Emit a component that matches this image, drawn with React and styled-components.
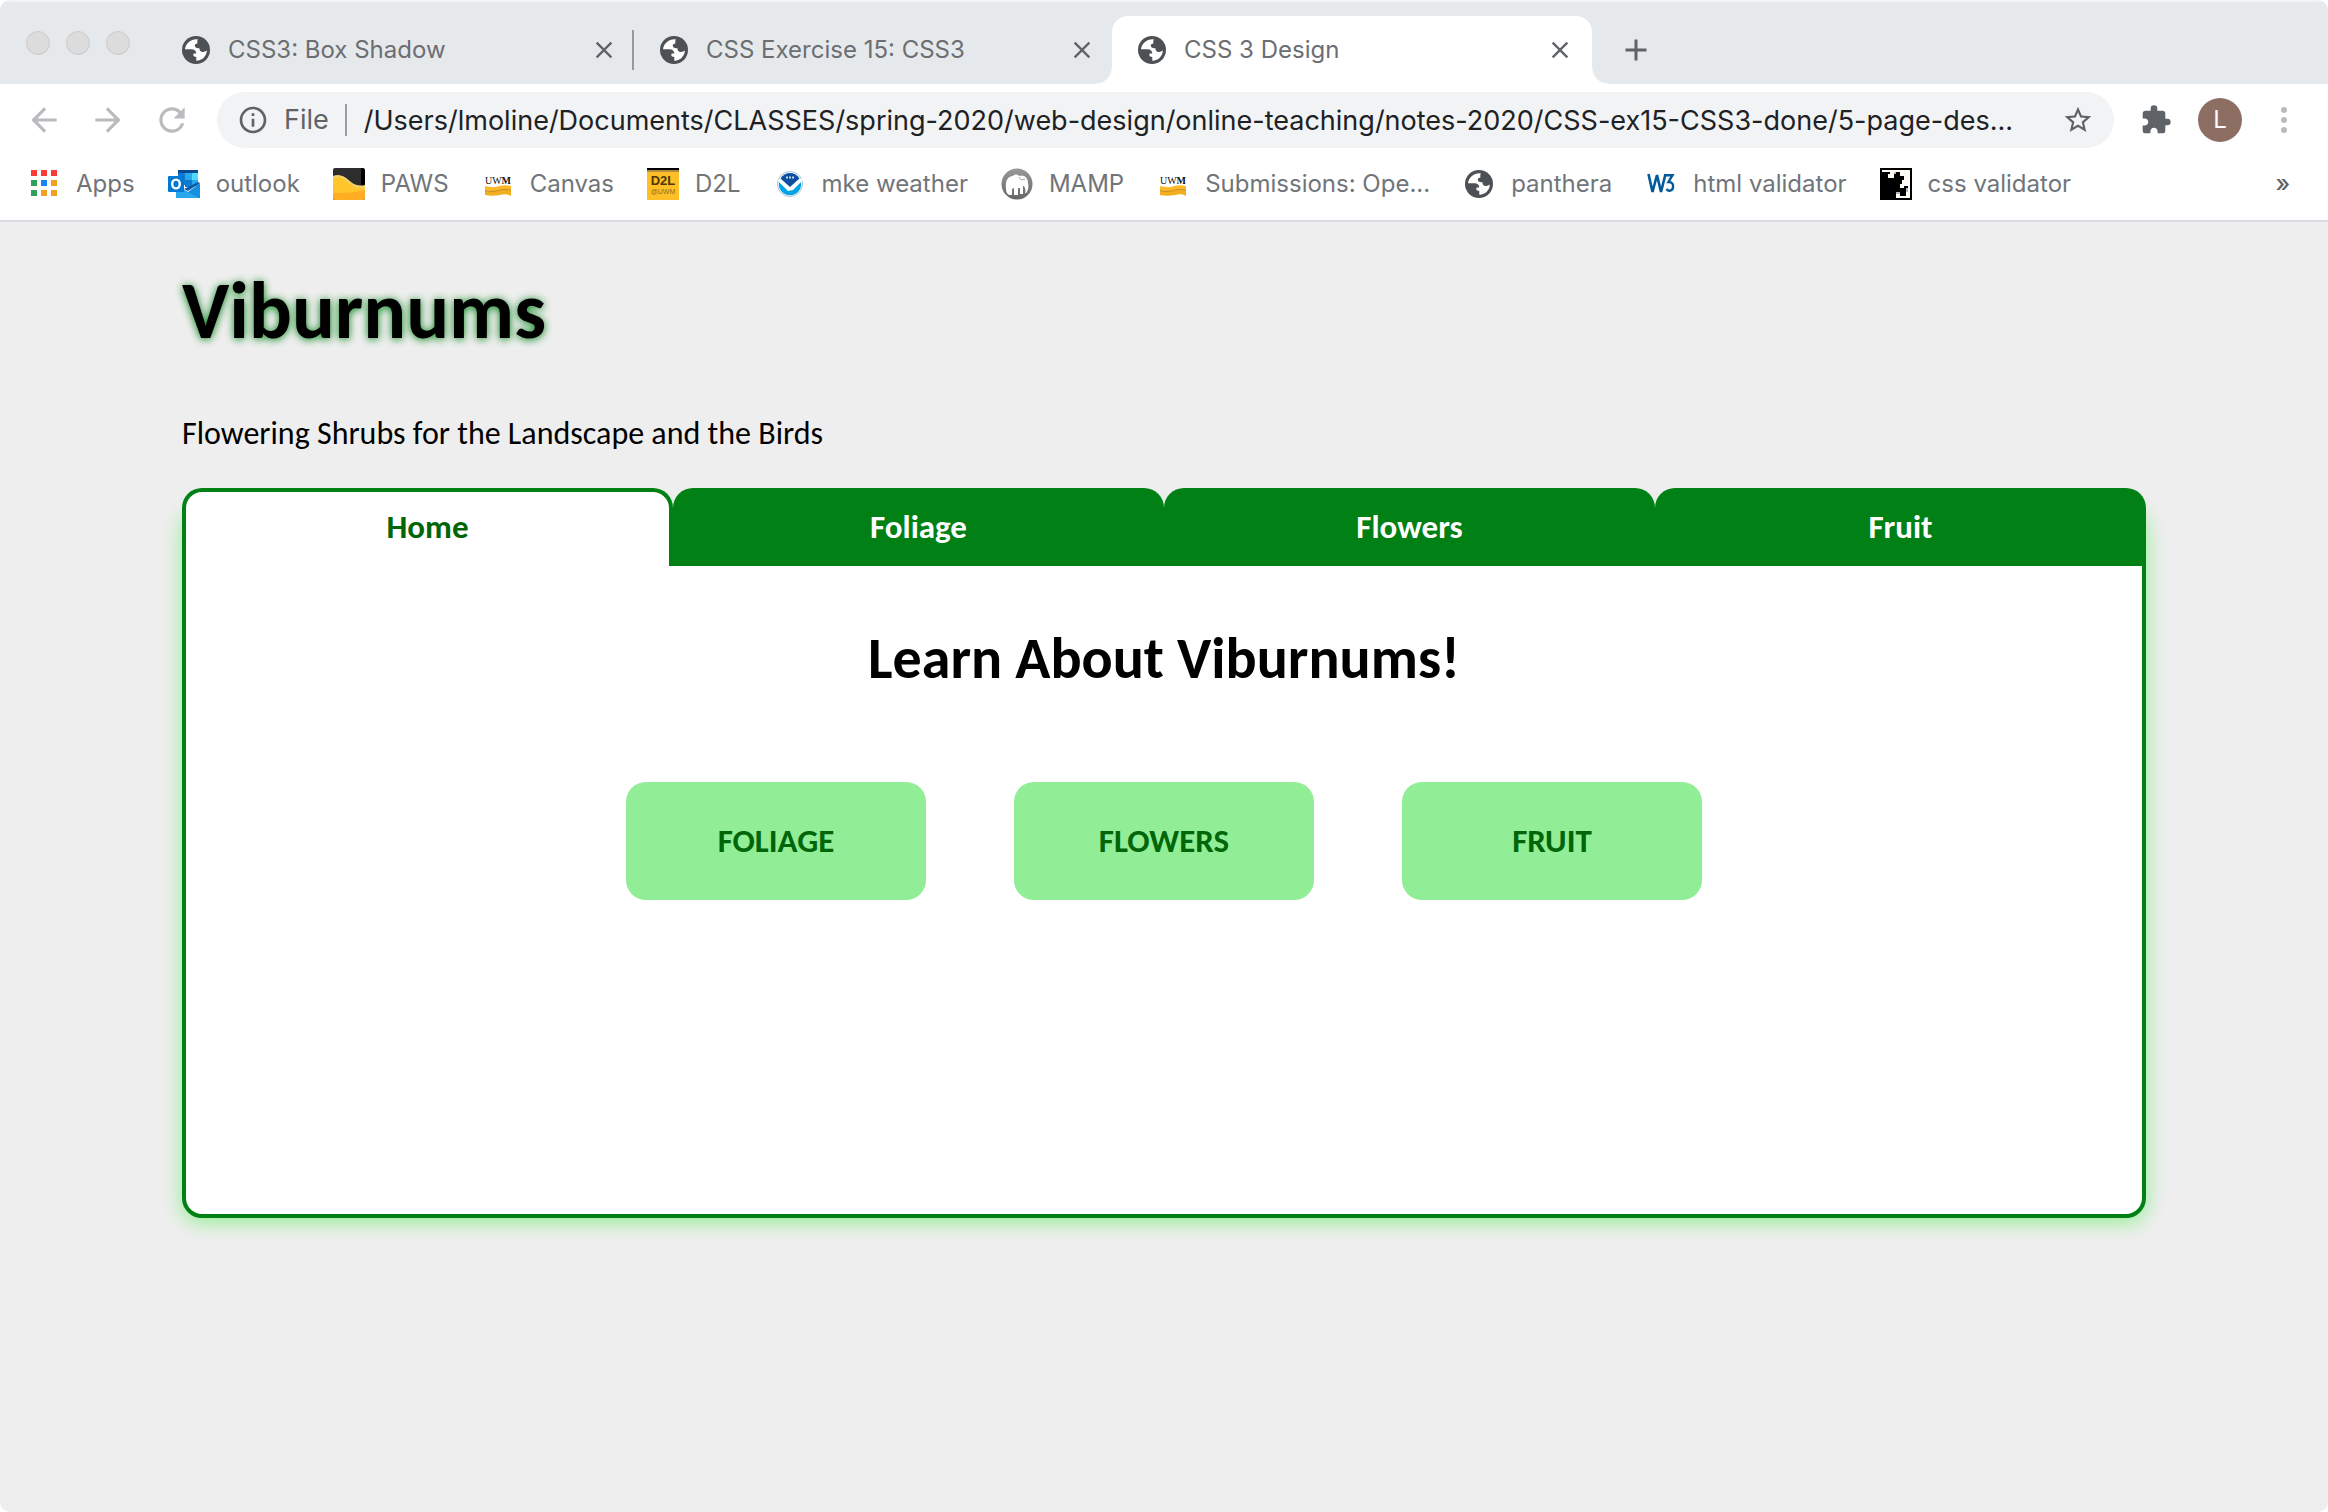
import React from 'react';
import styled, { createGlobalStyle } from 'styled-components';
import { MdArrowBack, MdArrowForward, MdRefresh, MdInfoOutline, MdStarBorder, MdExtension, MdClose, MdAdd } from 'react-icons/md';

const GlobalStyle = createGlobalStyle`
  *, *::before, *::after { box-sizing: border-box; }
  body { margin: 0; background: #fff; }
  button, input { font: inherit; color: inherit; }
  button { padding: 0; border: 0; background: none; cursor: pointer; }
  a { color: inherit; text-decoration: none; }
  svg { display: block; flex: none; }
`;

const Window = styled.div`
  display: flex;
  flex-direction: column;
  min-height: 100vh;
  overflow: hidden;
  border-radius: 10px;
  background: #eee;
  color: #000;
  font-family: Carlito, Calibri, Lato, sans-serif;
`;

const Chrome = styled.header`
  background: #fff;
  border-bottom: 2px solid #dadbe1;
  color: #5f6368;
  font-family: Inter, 'Liberation Sans', sans-serif;
  font-size: 24px;
  line-height: 32px;
`;

/* ---- tab strip ---- */
const TabStrip = styled.div`
  display: flex;
  align-items: flex-end;
  height: 84px;
  border-top: 2px solid #f1f3f4;
  background: #e6e9ec;
`;

const TrafficLights = styled.div`
  display: flex;
  align-self: flex-start;
  gap: 16px;
  width: 156px;
  padding: 29px 26px;
`;

const Light = styled.span`
  width: 24px;
  height: 24px;
  border: 1px solid #c9c9ca;
  border-radius: 50%;
  background: #dcdcdd;
`;

const BrowserTab = styled.div`
  position: relative;
  display: flex;
  align-items: center;
  gap: 16px;
  width: ${p => (p.$active ? 480 : 478)}px;
  height: 68px;
  padding: 0 ${p => (p.$active ? 18 : 16)}px 0 24px;
  color: #6b6e72;
  ${p => p.$divided && `
    background: linear-gradient(#96999c, #96999c) right center / 2px 40px no-repeat;
  `}
  ${p => p.$active && `
    border-radius: 16px 16px 0 0;
    background: #fff;
    &::before, &::after {
      content: '';
      position: absolute;
      bottom: 0;
      width: 16px;
      height: 16px;
    }
    &::before {
      right: 100%;
      background: radial-gradient(circle at 0 0, transparent 15px, #fff 16px);
    }
    &::after {
      left: 100%;
      background: radial-gradient(circle at 100% 0, transparent 15px, #fff 16px);
    }
  `}
`;

const TabTitle = styled.a`
  flex: 1;
  white-space: nowrap;
`;

const IconButton = styled.button`
  display: grid;
  place-items: center;
  flex: none;
  width: ${p => p.$size || 32}px;
  height: ${p => p.$size || 32}px;
  color: ${p => p.$color || '#5f6368'};
`;

const NewTab = styled.div`
  display: flex;
  align-items: center;
  height: 68px;
  padding-left: 26px;
`;

/* ---- toolbar ---- */
const Toolbar = styled.div`
  display: flex;
  align-items: center;
  gap: 26px;
  height: 72px;
  padding: 0 28px 0 25px;
`;

const Omnibox = styled.div`
  display: flex;
  align-items: center;
  flex: 1;
  min-width: 0;
  height: 56px;
  padding: 0 20px;
  border-radius: 28px;
  background: #f1f3f4;
  font-size: 27px;
`;

const Scheme = styled.span`
  padding: 0 16px 0 15px;
  border-right: 2px solid #9b9ea2;
`;

const Address = styled.input`
  flex: 1;
  min-width: 0;
  height: 40px;
  padding: 0 0 0 17px;
  border: 0;
  outline: 0;
  background: none;
  color: #202124;
`;

const Avatar = styled.button`
  flex: none;
  width: 44px;
  height: 44px;
  border-radius: 50%;
  background: #8d6e63;
  color: #fff;
`;

const Actions = styled.div`
  display: flex;
  align-items: center;
  gap: 26px;
`;

/* ---- bookmarks ---- */
const Bookmarks = styled.nav`
  display: flex;
  align-items: center;
  gap: 33px;
  height: 64px;
  padding: 0 38px 8px 28px;
  color: #70757a;
`;

const Bookmark = styled.a`
  display: flex;
  align-items: center;
  gap: 16px;
  white-space: nowrap;
`;

const More = styled.button`
  margin-left: auto;
  color: #5f6368;
  font-weight: 500;
`;

/* ---- page ---- */
const Page = styled.div`
  flex: 1;
  padding: 40px 182px 64px;
  font-size: 32px;
  line-height: 39px;
`;

const SiteTitle = styled.h1`
  margin: 0 0 54px;
  font-size: 80px;
  line-height: 98px;
  text-shadow: 0 1px 9px #008015;
`;

const Tagline = styled.p`
  margin: 0 0 35px;
`;

const SiteNav = styled.nav`
  position: relative;
  display: grid;
  grid-template-columns: repeat(4, 1fr);
  font-size: 33px;
  font-weight: 700;
  text-align: center;
`;

const NavTab = styled.a`
  padding: 16px 0 19px;
  border: 4px solid #008015;
  border-bottom: 0;
  border-radius: 20px 20px 0 0;
  background: ${p => (p.$current ? '#fff' : '#008015')};
  color: ${p => (p.$current ? '#006608' : '#fff')};
`;

const Panel = styled.main`
  min-height: 710px;
  margin-top: -58px;
  padding: 112px 0 64px;
  border: 4px solid #008015;
  border-radius: 20px;
  background: #fff;
  box-shadow: 0 4px 20px #90ee90;
  text-align: center;
`;

const Heading = styled.h2`
  margin: 0 0 88px;
  font-size: 58px;
  line-height: 70px;
`;

const ButtonRow = styled.div`
  display: flex;
  justify-content: center;
  gap: 88px;
`;

const BigLink = styled.a`
  width: 300px;
  padding: 40px 0 39px;
  border-radius: 20px;
  background: #91ee97;
  color: #006608;
  font-size: 33px;
  font-weight: 700;
`;

/* ---- drawings ---- */
const Globe = () => (
  <svg width="32" height="32" viewBox="0 0 32 32" aria-hidden="true">
    <circle cx="16" cy="16" r="14" fill="#4d5156" />
    <path fill="#fff" d="M17.8 5.2C11 4.6 5.6 9.200 5 15.200h6.500c3 0 4.800 1.800 4.800 4.300h-2.600c-.7 1.800-.6 3.300 2.600 3.500V26.800c5.900.1 10.300-4.700 10.600-10.200-1.500 1.200-3.400 1.700-5 1.300-2-.5-2.500-2.200-2.400-3.700-2.600.4-4.900-.6-4.700-2.900.1-1.300 1.300-1.700 2.600-1.800-.2-1.600-.2-3.200.4-4.300z" />
  </svg>
);

const AppsIcon = () => {
  const colors = ['#f93a37', '#f93a37', '#f93a37', '#2ea25a', '#1a82fb', '#f2a024', '#2ea25a', '#f2a024', '#f2a024'];
  return (
    <svg width="32" height="32" viewBox="0 0 32 32" aria-hidden="true">
      {colors.map((c, i) => (
        <rect key={i} x={3 + (i % 3) * 10} y={2 + Math.floor(i / 3) * 10} width="6" height="6" fill={c} />
      ))}
    </svg>
  );
};

const OutlookIcon = () => (
  <svg width="32" height="32" viewBox="0 0 32 32" aria-hidden="true">
    <path fill="#0a4a93" d="M10 2h20v4H10z" />
    <path fill="#0f7ad2" d="M10 5h7v12h-7z" />
    <path fill="#28a8ea" d="M17 5h7v7h-7z" />
    <path fill="#50d9ff" d="M24 5h6v7h-6z" />
    <path fill="#0f7ad2" d="M17 12h7v7h-7z" />
    <path fill="#28a8ea" d="M24 12h6v6h-6z" />
    <path fill="#1490df" d="M32 15v15H8V17l12 7z" />
    <path fill="#28a8ea" d="M8 30V18l23 12z" />
    <path fill="#0c5aa6" d="M30 14l2 1-12 8-4-2z" />
    <rect y="8" width="16" height="16" rx="1" fill="#0078d4" />
    <ellipse cx="8" cy="16" rx="3.800" ry="4.400" fill="none" stroke="#fff" strokeWidth="2.400" />
  </svg>
);

const PawsIcon = () => (
  <svg width="32" height="32" viewBox="0 0 32 32" aria-hidden="true">
    <rect width="32" height="32" rx="2" fill="#2d2d2d" />
    <path fill="#000" d="M28 0h2l2 2v18h-4z" />
    <path fill="#ffc52b" d="M0 9c8-3 13 2 18 6s10 4 14 3v12l-2 2H2l-2-2z" />
    <path fill="#f3d069" d="M0 8c8-3 13 2 18 6s10 4 14 3v3c-5 1-10 0-15-4S8 7 0 11z" />
    <path fill="#ffae23" d="M0 25c10 0 20 0 32-3v8l-2 2H2l-2-2z" />
  </svg>
);

const UwmIcon = () => (
  <svg width="32" height="32" viewBox="0 0 32 32" aria-hidden="true">
    <text x="16" y="16" textAnchor="middle" fontFamily="Liberation Serif, serif" fontSize="10" fill="#111">
      UW<tspan fontWeight="700">M</tspan>
    </text>
    <path fill="#fdb827" d="M3 18c5 1 9 2 14 0 4-1 8-1 12 0v4c-4-1-8-1-12 0-5 2-9 1-14 0z" />
    <path fill="#f3ae1e" d="M3 22.500c6 1 10 1 14-.3 4-1 8-1 12 0V28c-3-2-7-2-11-1-5 1-10 1-15 0z" />
    <path stroke="#b97f16" strokeWidth=".8" fill="none" d="M3 22.500c5 1 9 1.500 14-.3 4-1 8-1 12 0" />
  </svg>
);

const D2lIcon = () => (
  <svg width="32" height="32" viewBox="0 0 32 32" aria-hidden="true">
    <rect width="32" height="32" fill="#ffbf27" />
    <rect width="32" height="2" fill="#000" />
    <rect y="2" width="32" height="2" fill="#b38d42" />
    <text x="16" y="17" textAnchor="middle" fontFamily="Liberation Sans, sans-serif" fontWeight="700" fontSize="13" fill="#4a3805">D2L</text>
    <text x="16" y="26" textAnchor="middle" fontFamily="Liberation Sans, sans-serif" fontSize="7" fill="#94701a">@UWM</text>
  </svg>
);

const NoaaIcon = () => (
  <svg width="32" height="32" viewBox="0 0 32 32" aria-hidden="true">
    <circle cx="16" cy="16" r="12.500" fill="#fff" stroke="#a9bfdc" />
    <path fill="#0b4ea2" d="M6.500 10.500a11 11 0 0 1 19 0L16 19z" />
    <path fill="#00a3e6" d="M5 14l5 5 4 4 5-1 8-8a11.200 11.200 0 1 1-22 0z" />
    <path fill="none" stroke="#fff" strokeWidth="2" d="M4.500 11.500L15 21l3-1 10-8.500" />
    <path stroke="#c5d6ec" strokeWidth="2" strokeDasharray="2 1" d="M12 9.500h9" />
  </svg>
);

const MampIcon = () => (
  <svg width="32" height="32" viewBox="0 0 32 32" aria-hidden="true">
    <defs>
      <linearGradient id="mamp" x1="0" y1="0" x2="0" y2="1">
        <stop offset="0" stopColor="#999" />
        <stop offset="1" stopColor="#666" />
      </linearGradient>
    </defs>
    <circle cx="16" cy="16" r="15.500" fill="url(#mamp)" />
    <path fill="#fff" d="M5 21c-1-8 2-13 7-13 1-2 5-2 6 0 5-2 9 2 9 7 1 4 0 8-2 10l-1 0c1-3 0-5-1-7h-1v8h-3v-6h-2v7h-4v-7l-2 1v6H8c-2-1-3-3-3-6z" />
    <path stroke="#aaa" fill="none" d="M18 9l2 3 4-1" />
  </svg>
);

const W3Icon = () => (
  <svg width="32" height="32" viewBox="0 0 32 32" aria-hidden="true">
    <path fill="none" stroke="#005a9c" strokeWidth="2.600" d="M3.500 6l4 18L12 7l4 17 4.500-18" />
    <path fill="none" stroke="#005a9c" strokeWidth="2.400" d="M19 7.200h8.500L23.500 14c4 0 5 2.500 4.500 5.500-.6 3.500-4.500 4.500-6.500 1.500" />
  </svg>
);

const CssIcon = () => (
  <svg width="32" height="32" viewBox="0 0 32 32" aria-hidden="true">
    <rect width="32" height="32" fill="#000" />
    <path fill="#fffdf3" d="M2 2h28v28H16v-4h4v2h6v-8h2v-2h-4v2h-4v-4h2v-4h2v-4h-2V8h-2V4h-4v2h-2v4H8V6h2V4H2z" />
    <path fill="#b5b5c0" d="M16 24h4v2h-4zM14 4h2v2h-2zM26 20h2v4h-2z" />
  </svg>
);

const MenuDots = () => (
  <svg width="32" height="32" viewBox="0 0 32 32" fill="#b9bbbe" aria-hidden="true">
    {[6, 16, 26].map(y => <circle key={y} cx="16" cy={y} r="3" />)}
  </svg>
);

const browserTabs = [
  { title: 'CSS3: Box Shadow', divided: true },
  { title: 'CSS Exercise 15: CSS3' },
  { title: 'CSS 3 Design', active: true },
];

const bookmarks = [
  ['Apps', AppsIcon],
  ['outlook', OutlookIcon],
  ['PAWS', PawsIcon],
  ['Canvas', UwmIcon],
  ['D2L', D2lIcon],
  ['mke weather', NoaaIcon],
  ['MAMP', MampIcon],
  ['Submissions: Ope...', UwmIcon],
  ['panthera', Globe],
  ['html validator', W3Icon],
  ['css validator', CssIcon],
];

const sections = ['Foliage', 'Flowers', 'Fruit'];

export default function App() {
  return (
    <>
      <GlobalStyle />
      <Window>
        <Chrome>
          <TabStrip>
            <TrafficLights><Light /><Light /><Light /></TrafficLights>
            {browserTabs.map(tab => (
              <BrowserTab key={tab.title} $active={tab.active} $divided={tab.divided}>
                <Globe />
                <TabTitle href="#">{tab.title}</TabTitle>
                <IconButton $size={28} aria-label={`Close ${tab.title}`}><MdClose size={28} /></IconButton>
              </BrowserTab>
            ))}
            <NewTab>
              <IconButton $size={36} aria-label="New tab"><MdAdd size={36} /></IconButton>
            </NewTab>
          </TabStrip>
          <Toolbar>
            <IconButton aria-label="Back" $size={38} $color="#b9bbbe"><MdArrowBack size={38} /></IconButton>
            <IconButton aria-label="Forward" $size={38} $color="#b9bbbe"><MdArrowForward size={38} /></IconButton>
            <IconButton aria-label="Reload" $size={38} $color="#b9bbbe"><MdRefresh size={38} /></IconButton>
            <Omnibox>
              <MdInfoOutline size={32} />
              <Scheme>File</Scheme>
              <Address
                aria-label="Address"
                defaultValue="/Users/lmoline/Documents/CLASSES/spring-2020/web-design/online-teaching/notes-2020/CSS-ex15-CSS3-done/5-page-des..."
              />
              <IconButton aria-label="Bookmark this page"><MdStarBorder size={32} /></IconButton>
            </Omnibox>
            <Actions>
              <IconButton aria-label="Extensions"><MdExtension size={32} /></IconButton>
              <Avatar aria-label="Profile L">L</Avatar>
              <IconButton aria-label="Menu"><MenuDots /></IconButton>
            </Actions>
          </Toolbar>
          <Bookmarks aria-label="Bookmarks">
            {bookmarks.map(([label, Icon]) => (
              <Bookmark key={label} href="#"><Icon />{label}</Bookmark>
            ))}
            <More aria-label="More bookmarks">»</More>
          </Bookmarks>
        </Chrome>
        <Page>
          <SiteTitle>Viburnums</SiteTitle>
          <Tagline>Flowering Shrubs for the Landscape and the Birds</Tagline>
          <SiteNav aria-label="Sections">
            <NavTab href="#" $current aria-current="page">Home</NavTab>
            {sections.map(name => <NavTab key={name} href="#">{name}</NavTab>)}
          </SiteNav>
          <Panel>
            <Heading>Learn About Viburnums!</Heading>
            <ButtonRow>
              {sections.map(name => <BigLink key={name} href="#">{name.toUpperCase()}</BigLink>)}
            </ButtonRow>
          </Panel>
        </Page>
      </Window>
    </>
  );
}
